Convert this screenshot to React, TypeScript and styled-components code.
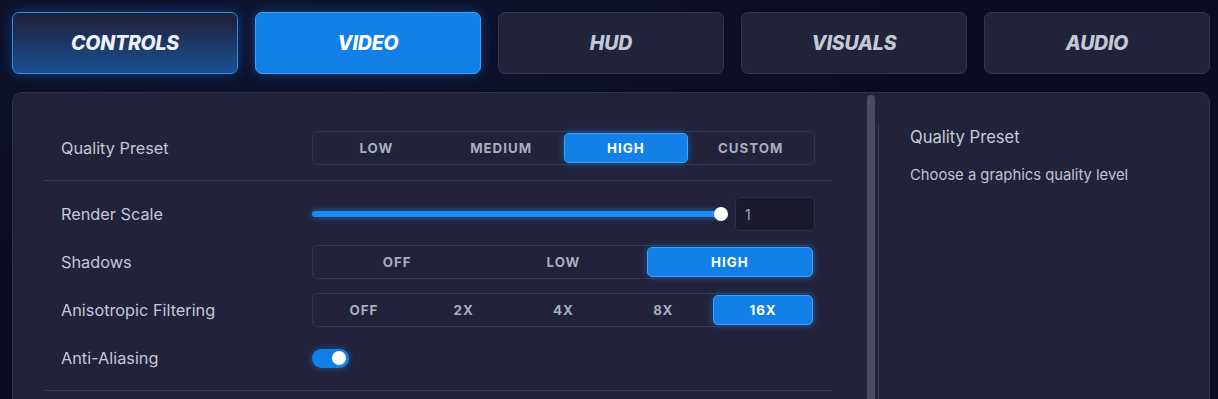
import React from "react";
import styled, { createGlobalStyle, css } from "styled-components";

const Global = createGlobalStyle`
  html, body { margin: 0; padding: 0; }
  body {
    background: #0a0c1f;
    font-family: Inter, "Open Sans", sans-serif;
    overflow: hidden;
  }
`;

const Page = styled.div`
  width: 1218px;
  height: 399px;
  padding: 12px 8px 0 12px;
  box-sizing: border-box;
  background: radial-gradient(ellipse at 20% 0%, #0e1330 0%, #0a0c1f 60%);
  display: flex;
  flex-direction: column;
  gap: 18px;
`;

const Tabs = styled.div`
  display: flex;
  gap: 17px;
`;

const Tab = styled.button<{ $variant: "hover" | "active" | "idle" }>`
  flex: 1;
  height: 62px;
  border-radius: 7px;
  font-family: Inter, sans-serif;
  font-style: italic;
  font-weight: 800;
  font-size: 19.5px;
  letter-spacing: -0.2px;
  text-transform: uppercase;
  cursor: pointer;
  ${(p) =>
    p.$variant === "active"
      ? css`
          background: #1380e8;
          border: 1px solid #3c9fff;
          color: #ffffff;
          box-shadow: 0 0 12px rgba(19, 128, 232, 0.45);
        `
      : p.$variant === "hover"
      ? css`
          background: linear-gradient(180deg, #201f36 0%, #1c3a6a 55%, #1a4f94 100%);
          border: 1px solid #2a8ee6;
          color: #eef1f8;
          box-shadow: 0 0 12px rgba(19, 128, 232, 0.4);
        `
      : css`
          background: #22223a;
          border: 1px solid #34354b;
          color: #c3c8d6;
        `}
`;

const Panel = styled.div`
  flex: 1;
  background: #22223a;
  border: 1px solid #30314a;
  border-bottom: none;
  border-radius: 10px 10px 0 0;
  display: flex;
  overflow: hidden;
`;

const Settings = styled.div`
  width: 854px;
  padding: 22px 35px 0 31px;
  box-sizing: border-box;
  display: flex;
  flex-direction: column;
`;

const Section = styled.div`
  display: flex;
  flex-direction: column;
  gap: 14px;
  padding: 16px 0 15px;
  border-bottom: 1px solid #3a3b54;
`;

const Row = styled.div`
  display: grid;
  grid-template-columns: 251px 1fr;
  align-items: center;
  height: 34px;
  padding: 0 17px;
`;

const Label = styled.span`
  font-size: 16.3px;
  color: #c4c8d4;
`;

const Segmented = styled.div<{ $cols: number }>`
  display: grid;
  grid-template-columns: repeat(${(p) => p.$cols}, 1fr);
  height: 34px;
  box-sizing: border-box;
  border: 1px solid #35364e;
  border-radius: 6px;
  padding: 1px;
`;

const SegOption = styled.button<{ $active?: boolean }>`
  border-radius: 5px;
  font-family: Inter, sans-serif;
  font-weight: 700;
  font-size: 13.3px;
  letter-spacing: 1px;
  cursor: pointer;
  ${(p) =>
    p.$active
      ? css`
          background: #1380e8;
          border: 1px solid #3ea2ff;
          color: #ffffff;
          box-shadow: 0 0 8px rgba(19, 128, 232, 0.55);
        `
      : css`
          background: transparent;
          border: 1px solid transparent;
          color: #a9aebd;
        `}
`;

const SliderRow = styled.div`
  display: flex;
  align-items: center;
  gap: 13px;
`;

const Track = styled.div`
  flex: 1;
  height: 6px;
  border-radius: 3px;
  background: #1a8af2;
  box-shadow: 0 0 6px rgba(26, 138, 242, 0.75);
  display: flex;
  align-items: center;
  justify-content: flex-end;
`;

const Thumb = styled.div`
  width: 14px;
  height: 14px;
  border-radius: 50%;
  background: #ffffff;
  margin-right: -6px;
  flex: none;
`;

const NumberBox = styled.div`
  width: 80px;
  height: 34px;
  box-sizing: border-box;
  background: #1b1b2d;
  border: 1px solid #2f3046;
  border-radius: 5px;
  padding-left: 9px;
  display: flex;
  align-items: center;
  font-size: 14px;
  color: #a3a7b7;
`;

const Toggle = styled.div<{ $on: boolean }>`
  width: 37px;
  height: 19px;
  border-radius: 10px;
  background: ${(p) => (p.$on ? "#1380e8" : "#3a3b54")};
  box-shadow: ${(p) => (p.$on ? "0 0 6px rgba(19,128,232,0.6)" : "none")};
  display: flex;
  align-items: center;
  justify-content: ${(p) => (p.$on ? "flex-end" : "flex-start")};
  padding: 0 3px;
  box-sizing: border-box;
`;

const Knob = styled.div`
  width: 14px;
  height: 14px;
  border-radius: 50%;
  background: #ffffff;
`;

const ScrollTrack = styled.div`
  width: 8px;
  padding-top: 2px;
  margin-right: 3px;
  display: flex;
  flex-direction: column;
`;

const ScrollThumb = styled.div`
  flex: 1;
  background: #4b4c64;
  border-radius: 4px 4px 0 0;
`;

const Info = styled.div`
  flex: 1;
  margin-top: 31px;
  border-left: 1px solid #3a3b54;
  padding: 3px 31px;
  display: flex;
  flex-direction: column;
  gap: 19px;
`;

const InfoTitle = styled.div`
  font-size: 16.6px;
  color: #c6cad6;
`;

const InfoText = styled.div`
  font-size: 14.8px;
  color: #c0c4d0;
`;

function Seg({ options, active }: { options: string[]; active: string }) {
  return (
    <Segmented $cols={options.length}>
      {options.map((o) => (
        <SegOption key={o} $active={o === active}>
          {o}
        </SegOption>
      ))}
    </Segmented>
  );
}

export default function App() {
  return (
    <>
      <Global />
      <Page>
        <Tabs>
          <Tab $variant="hover">Controls</Tab>
          <Tab $variant="active">Video</Tab>
          <Tab $variant="idle">HUD</Tab>
          <Tab $variant="idle">Visuals</Tab>
          <Tab $variant="idle">Audio</Tab>
        </Tabs>
        <Panel>
          <Settings>
            <Section>
              <Row>
                <Label>Quality Preset</Label>
                <Seg options={["LOW", "MEDIUM", "HIGH", "CUSTOM"]} active="HIGH" />
              </Row>
            </Section>
            <Section>
              <Row>
                <Label>Render Scale</Label>
                <SliderRow>
                  <Track>
                    <Thumb />
                  </Track>
                  <NumberBox>1</NumberBox>
                </SliderRow>
              </Row>
              <Row>
                <Label>Shadows</Label>
                <Seg options={["OFF", "LOW", "HIGH"]} active="HIGH" />
              </Row>
              <Row>
                <Label>Anisotropic Filtering</Label>
                <Seg options={["OFF", "2X", "4X", "8X", "16X"]} active="16X" />
              </Row>
              <Row>
                <Label>Anti-Aliasing</Label>
                <Toggle $on>
                  <Knob />
                </Toggle>
              </Row>
            </Section>
          </Settings>
          <ScrollTrack>
            <ScrollThumb />
          </ScrollTrack>
          <Info>
            <InfoTitle>Quality Preset</InfoTitle>
            <InfoText>Choose a graphics quality level</InfoText>
          </Info>
        </Panel>
      </Page>
    </>
  );
}
